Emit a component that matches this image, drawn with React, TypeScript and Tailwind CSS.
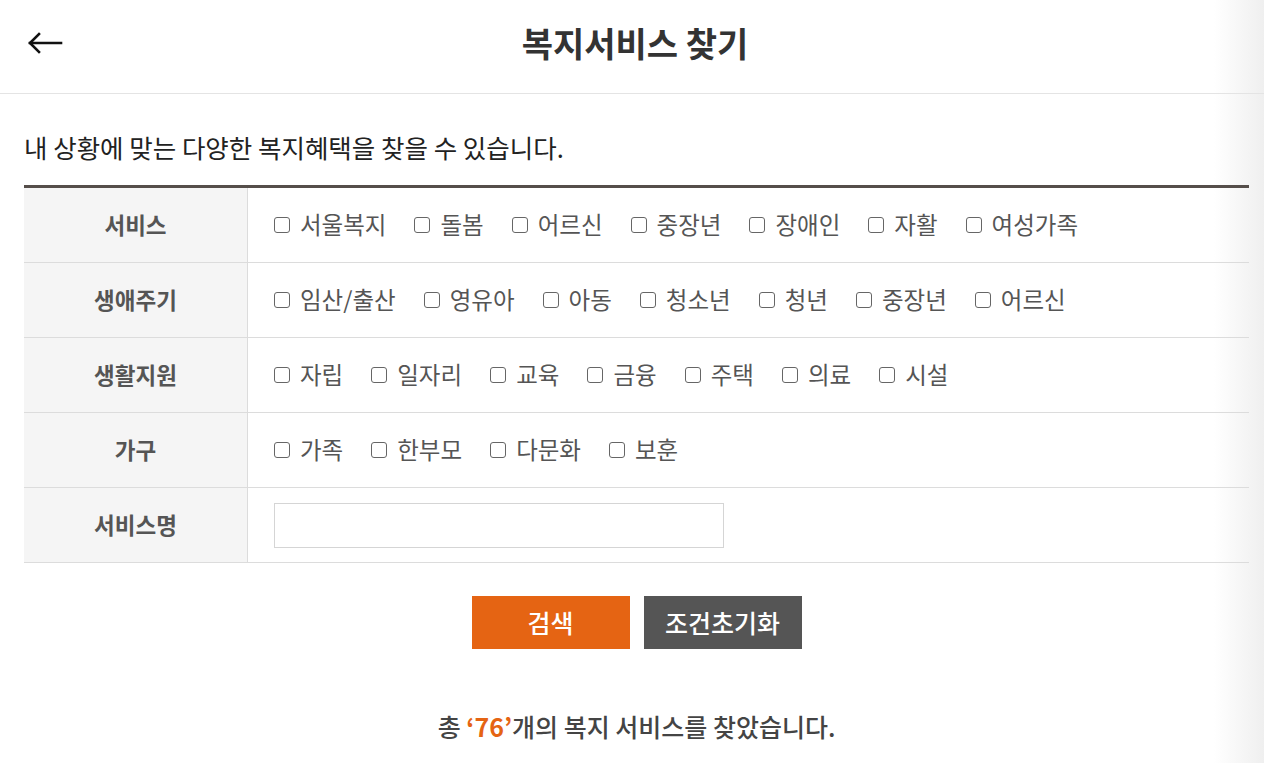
import { useState } from "react";

const ROWS: { label: string; items: string[] }[] = [
  { label: "서비스", items: ["서울복지", "돌봄", "어르신", "중장년", "장애인", "자활", "여성가족"] },
  { label: "생애주기", items: ["임산/출산", "영유아", "아동", "청소년", "청년", "중장년", "어르신"] },
  { label: "생활지원", items: ["자립", "일자리", "교육", "금융", "주택", "의료", "시설"] },
  { label: "가구", items: ["가족", "한부모", "다문화", "보훈"] },
];

const font = { fontFamily: '"Noto Sans CJK KR", "Noto Sans", sans-serif' };

function Check({ label, checked, onChange }: { label: string; checked: boolean; onChange: () => void }) {
  return (
    <label className="flex cursor-pointer items-center gap-[10px] text-[23.5px] text-[#555]">
      <input type="checkbox" checked={checked} onChange={onChange} className="sr-only" />
      <span
        className={`block h-[16px] w-[16px] shrink-0 rounded-[3px] border-[1.5px] border-[#666] ${
          checked ? "bg-[#e56413]" : "bg-white"
        }`}
      />
      <span className="leading-none">{label}</span>
    </label>
  );
}

export default function App() {
  const [checked, setChecked] = useState<Record<string, boolean>>({});
  const [name, setName] = useState("");

  const toggle = (key: string) => setChecked((c) => ({ ...c, [key]: !c[key] }));

  return (
    <div className="relative min-h-[763px] overflow-hidden bg-white" style={font}>
      <div className="pointer-events-none absolute inset-y-0 right-0 w-[50px] bg-gradient-to-r from-transparent to-[#efefef]" />

      <div className="relative">
        <header className="relative flex h-[94px] items-center justify-center border-b border-[#e4e4e4] pb-[8px]">
          <button type="button" aria-label="뒤로" className="absolute left-[27px] top-[31px]">
            <svg width="36" height="24" viewBox="0 0 36 24" fill="none" stroke="#111" strokeWidth="2.6" strokeLinecap="square">
              <path d="M3 12H34" />
              <path d="M12 3L3 12L12 21" strokeLinejoin="miter" />
            </svg>
          </button>
          <h1 className="pl-[6px] text-[34px] font-bold text-[#333]">복지서비스 찾기</h1>
        </header>

        <main className="pl-6 pr-[15px]">
          <p className="pt-[36px] pb-[21px] text-[25.5px] leading-[34px] text-[#222]">
            내 상황에 맞는 다양한 복지혜택을 찾을 수 있습니다.
          </p>

          <div className="border-t-[3px] border-[#554e4a]">
            {ROWS.map((row) => (
              <div key={row.label} className="grid h-[75px] grid-cols-[224px_1fr] border-b border-[#dcdcdc]">
                <div className="flex items-center justify-center border-r border-[#dcdcdc] bg-[#f5f5f5] text-[22.5px] font-bold text-[#555]">
                  {row.label}
                </div>
                <div className="flex items-center gap-[28px] pl-[26px]">
                  {row.items.map((item) => {
                    const key = `${row.label}-${item}`;
                    return <Check key={key} label={item} checked={!!checked[key]} onChange={() => toggle(key)} />;
                  })}
                </div>
              </div>
            ))}
            <div className="grid h-[75px] grid-cols-[224px_1fr] border-b border-[#dcdcdc]">
              <div className="flex items-center justify-center border-r border-[#dcdcdc] bg-[#f5f5f5] text-[22.5px] font-bold text-[#555]">
                서비스명
              </div>
              <div className="flex items-center pl-[26px]">
                <input
                  value={name}
                  onChange={(e) => setName(e.target.value)}
                  className="h-[45px] w-[450px] border border-[#d5d5d5] bg-white px-3 text-[20px] text-[#333] outline-none"
                />
              </div>
            </div>
          </div>

          <div className="flex justify-center gap-[14px] pt-[33px]">
            <button type="button" className="h-[53px] w-[158px] bg-[#e56413] text-[25px] font-medium text-white">
              검색
            </button>
            <button
              type="button"
              onClick={() => {
                setChecked({});
                setName("");
              }}
              className="h-[53px] w-[158px] bg-[#555555] text-[25px] font-medium text-white"
            >
              조건초기화
            </button>
          </div>

          <p className="pt-[59px] text-center text-[25px] font-medium text-[#444]">
            총 <span className="font-bold text-[#e56413]">‘76’</span>개의 복지 서비스를 찾았습니다.
          </p>
        </main>
      </div>
    </div>
  );
}
